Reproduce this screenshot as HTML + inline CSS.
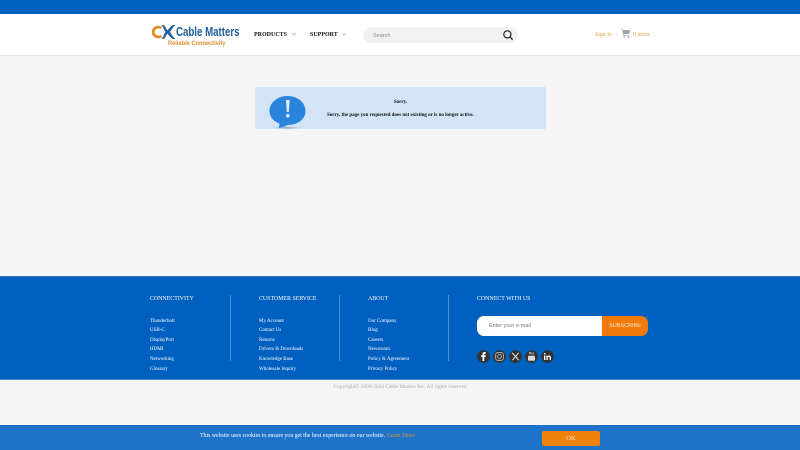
<!DOCTYPE html>
<html lang="en">
<head>
<meta charset="utf-8">
<title>Cable Matters</title>
<style>
html,body{margin:0;padding:0;width:800px;height:450px;overflow:hidden;background:#f5f5f5;font-family:"Liberation Serif",serif}
div,span,a,svg{position:absolute;display:block;white-space:nowrap}
#w{left:0;top:0;width:800px;height:450px;filter:blur(.3px)}
.fh{color:#fff;font-size:5.9px;line-height:8px;top:294.800px}
.l{color:#fff;font-size:5px;line-height:7px}
.sep{width:1px;background:#4f90d6;top:295px;height:66px}
</style>
</head>
<body>
<div id="w">
<div style="left:0;top:0;width:800px;height:14px;background:#0060bf"></div>
<div style="left:0;top:14px;width:800px;height:41px;background:#fff;border-bottom:1px solid #e2e2e2"></div>

<svg style="left:151px;top:24px" width="25" height="16" viewBox="0 0 25 16">
<path d="M10.200 4A5 5 0 1 0 10.200 12" fill="none" stroke="#e28a26" stroke-width="2.800"/>
<path d="M10.500 1.500C12.500 3 13 6 14.500 8C13 10 12.500 13 10.500 14.500L12.500 15C14.500 13.500 15.500 10.500 16.500 9.500C17.500 10.500 19 13.500 22 15L24.500 15C21.500 12.500 20.500 10 19 8C20.500 6 21.500 3.500 24.500 1L22 1C19 2.500 17.500 5.500 16.500 6.500C15.500 5.500 14.500 2.500 12.500 1Z" fill="#1d5f99"/>
</svg>
<div style="left:176px;top:24.500px;font:bold 12.500px/15px 'Liberation Sans',sans-serif;color:#1d5f99;transform:scaleX(.775);transform-origin:0 0">Cable Matters</div>
<div style="left:168px;top:39.500px;font:bold 6.400px/8px 'Liberation Sans',sans-serif;color:#d98f2b;transform:scaleX(.89);transform-origin:0 0">Reliable Connectivity</div>

<div style="left:254px;top:31.400px;font-size:6px;line-height:8px;font-weight:bold;color:#111">PRODUCTS</div>
<svg style="left:291px;top:32px" width="6" height="5" viewBox="0 0 6 5"><path d="M1 1.200L3 3.200L5 1.200" fill="none" stroke="#999" stroke-width=".6"/></svg>
<div style="left:310px;top:31.400px;font-size:6px;line-height:8px;font-weight:bold;color:#111">SUPPORT</div>
<svg style="left:341px;top:32px" width="6" height="5" viewBox="0 0 6 5"><path d="M1 1.200L3 3.200L5 1.200" fill="none" stroke="#999" stroke-width=".6"/></svg>

<div style="left:363px;top:27px;width:155px;height:16px;border-radius:8px;background:#f1f1f1"></div>
<div style="left:373px;top:31.500px;font:5.500px/8px 'Liberation Sans',sans-serif;color:#888">Search</div>
<svg style="left:502px;top:29px" width="12" height="12" viewBox="0 0 12 12"><circle cx="5.400" cy="5.400" r="3.600" fill="none" stroke="#222" stroke-width="1.200"/><path d="M8 8L10.600 10.600" stroke="#222" stroke-width="1.400"/></svg>

<div style="left:595px;top:31px;font-size:5.800px;line-height:8px;color:#e8a33d">Sign In</div>
<div style="left:616px;top:32px;width:1px;height:5px;background:#f0f0f0"></div>
<svg style="left:620px;top:28px" width="11" height="11" viewBox="0 0 11 11"><path d="M.5 1H2.300L3.500 7.500H9.500" fill="none" stroke="#9aa3ab" stroke-width=".6"/><path d="M2.600 2H10L9.300 6H3.300Z" fill="#98a4ae"/><circle cx="4.200" cy="9" r=".8" fill="#8a929a"/><circle cx="8.600" cy="9" r=".8" fill="#8a929a"/></svg>
<div style="left:633px;top:31px;font-size:5.800px;line-height:8px;color:#e8a33d">0 items</div>

<div style="left:255px;top:87px;width:291px;height:42px;background:#d2e4f6;border-radius:1px;overflow:hidden">
<svg style="left:10px;top:6px" width="52" height="36" viewBox="0 0 52 36">
<defs><radialGradient id="s"><stop offset="0" stop-color="#7d8b9b" stop-opacity=".85"/><stop offset="1" stop-color="#d2e4f6" stop-opacity="0"/></radialGradient></defs>
<ellipse cx="22" cy="34.800" rx="19" ry="2" fill="url(#s)"/>
<path d="M22.500 3C32.500 3 40.500 9.500 40.500 18C40.500 26.500 32.500 32 22.500 32C20 33.500 17 34.500 13.500 35C14.500 33.500 14.500 31 14.300 30.500C8 28 4.500 23.500 4.500 18C4.500 9.500 12.500 3 22.500 3Z" fill="#2b84dc"/>
<path d="M21 7H24.600L23.800 19H21.800Z" fill="#e4effa"/><circle cx="22.800" cy="22.800" r="1.800" fill="#e4effa"/>
</svg>
</div>
<div style="left:255px;top:98.500px;width:291px;text-align:center;font-size:5px;line-height:7px;font-weight:bold;color:#111">Sorry.</div>
<div style="left:327px;top:111.500px;font-size:5px;line-height:7px;font-weight:bold;color:#111">Sorry, the page you requested does not existing or is no longer active.</div>

<div style="left:0;top:276px;width:800px;height:104px;background:#0060bf;border-top:1px solid #2c7ccb;border-bottom:1px solid #3d8ddb;box-sizing:border-box"></div>

<div class="fh" style="left:150px">CONNECTIVITY</div>
<div class="l" style="left:150px;top:317.500px">Thunderbolt</div>
<div class="l" style="left:150px;top:327px">USB-C</div>
<div class="l" style="left:150px;top:336.500px">DisplayPort</div>
<div class="l" style="left:150px;top:346.200px">HDMI</div>
<div class="l" style="left:150px;top:355.800px">Networking</div>
<div class="l" style="left:150px;top:365.500px">Glossary</div>
<div class="sep" style="left:230px"></div>

<div class="fh" style="left:259px">CUSTOMER SERVICE</div>
<div class="l" style="left:259px;top:317.500px">My Account</div>
<div class="l" style="left:259px;top:327px">Contact Us</div>
<div class="l" style="left:259px;top:336.500px">Returns</div>
<div class="l" style="left:259px;top:346.200px">Drivers &amp; Downloads</div>
<div class="l" style="left:259px;top:355.800px">Knowledge Base</div>
<div class="l" style="left:259px;top:365.500px">Wholesale Inquiry</div>
<div class="sep" style="left:339px"></div>

<div class="fh" style="left:368px">ABOUT</div>
<div class="l" style="left:368px;top:317.500px">Our Company</div>
<div class="l" style="left:368px;top:327px">Blog</div>
<div class="l" style="left:368px;top:336.500px">Careers</div>
<div class="l" style="left:368px;top:346.200px">Newsroom</div>
<div class="l" style="left:368px;top:355.800px">Policy &amp; Agreement</div>
<div class="l" style="left:368px;top:365.500px">Privacy Policy</div>
<div class="sep" style="left:448px"></div>

<div class="fh" style="left:477px">CONNECT WITH US</div>
<div style="left:477px;top:316px;width:126px;height:20px;background:#fff;border-radius:7px 0 0 7px"></div>
<div style="left:489px;top:322px;font:5.500px/8px 'Liberation Sans',sans-serif;color:#777">Enter your e-mail</div>
<div style="left:602px;top:316px;width:46px;height:20px;background:#f27a0c;border-radius:0 7px 7px 0;color:#ffe6cf;text-align:center;font:5.500px/20px 'Liberation Sans',sans-serif">SUBSCRIBE</div>

<svg style="left:477px;top:349px" width="78" height="15" viewBox="0 0 78 15">
<g fill="#333"><circle cx="6.500" cy="7.500" r="6.300"/><circle cx="22.500" cy="7.500" r="6.300"/><circle cx="38.500" cy="7.500" r="6.300"/><circle cx="54.500" cy="7.500" r="6.300"/><circle cx="70.500" cy="7.500" r="6.300"/></g>
<path d="M5.500 12V8H4.200V6.300H5.500V5.200C5.500 3.700 6.300 3 7.600 3H8.800V4.700H8C7.400 4.700 7.300 5 7.300 5.400V6.300H8.800L8.600 8H7.300V12Z" fill="#fff"/>
<rect x="18.700" y="3.700" width="7.600" height="7.600" rx="2" fill="none" stroke="#ccc" stroke-width=".8"/><circle cx="22.500" cy="7.500" r="1.900" fill="none" stroke="#ccc" stroke-width=".8"/>
<path d="M35.200 3.800L41.800 11.200M41.600 3.800L35.400 11.200" stroke="#ddd" stroke-width="1.100"/>
<rect x="51" y="6.700" width="7" height="5" rx="1" fill="#ddd"/><path d="M52 2.800L53 5L54 2.800M55 3.500V5.500M56.500 3.500V5.500" stroke="#ddd" stroke-width=".7" fill="none"/>
<path d="M67 6.500H68.400V11H67ZM67 4H68.400V5.400H67ZM69.400 6.500H70.700V7.200C71.700 6 74 6.200 74 8.500V11H72.600V8.800C72.600 7.500 70.800 7.500 70.800 8.800V11H69.400Z" fill="#fff"/>
</svg>

<div style="left:0;top:384px;width:800px;text-align:center;font-size:5.400px;line-height:7px;color:#a9a9a9">Copyright© 2009-2020 Cable Matters Inc. All rights reserved</div>

<div style="left:0;top:425px;width:800px;height:25px;background:#1e73c8"></div>
<div style="left:200px;top:432px;font-size:5.830px;line-height:8px;color:#fff">This website uses cookies to ensure you get the best experience on our website.</div>
<div style="left:387px;top:432px;font-size:5.830px;line-height:8px;color:#e08a3c">Learn More</div>
<div style="left:542px;top:431px;width:58px;height:15px;background:#ee820a;border-radius:2px;color:#ffe6cf;text-align:center;font-size:6.500px;line-height:15px">OK</div>
</div>
</body>
</html>
